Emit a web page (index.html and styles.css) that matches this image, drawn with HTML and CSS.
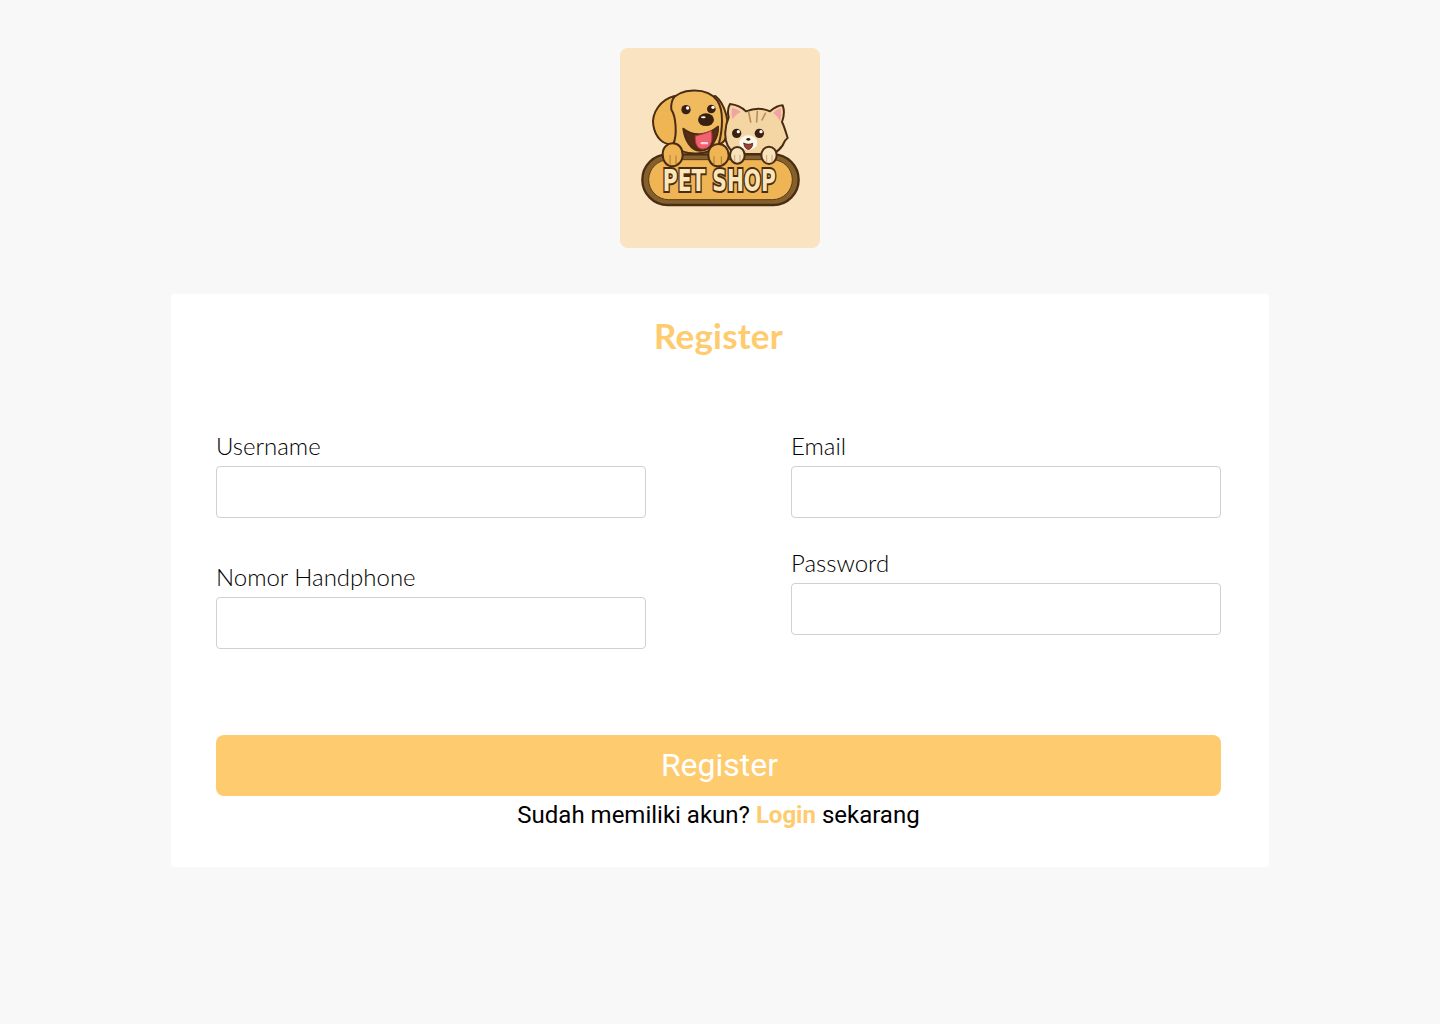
FILE: index.html
```html
<!DOCTYPE html>
<html lang="id">
<head>
<meta charset="utf-8">
<title>Register</title>
<link rel="stylesheet" href="styles.css">
</head>
<body>
<main class="page">
  <div class="logo-tile">
    <svg class="logo" viewBox="0 0 600 600" role="img" aria-label="Pet Shop">
      <g stroke="#4a2c12" stroke-width="6" stroke-linejoin="round" stroke-linecap="round">
        <!-- dog -->
        <path class="dog-ear" d="M286 144C316 168 330 225 320 262C314 285 300 292 288 284C284 240 280 190 270 150Z"/>
        <path class="dog-head" d="M150 160C180 118 262 116 292 158C312 188 308 245 296 290C270 322 190 328 166 292C146 250 136 195 150 160Z"/>
        <path class="dog-ear" d="M164 144C122 154 94 195 100 232C106 268 130 294 160 287C172 262 168 205 154 185C152 170 156 156 164 144Z"/>
        <path class="dog-mouth" d="M190 242C222 268 262 262 294 236C296 268 274 308 240 308C212 308 194 274 190 242Z"/>
        <path class="dog-tongue" d="M226 264C240 260 258 256 274 248C278 272 276 298 252 303C232 306 224 286 226 264Z"/>
        <rect class="tongue-glint" x="242" y="282" width="22" height="7" rx="3.5"/>
        <ellipse class="dark" cx="258" cy="215" rx="24" ry="19"/>
        <circle class="dark" cx="198" cy="185" r="14"/>
        <circle class="dark" cx="274" cy="183" r="13"/>
        <!-- cat -->
        <path class="cat-body" d="M326 208C322 192 324 178 330 168C348 170 366 178 378 190C402 180 428 180 450 190C462 180 476 172 488 172C494 188 492 206 486 222C494 238 498 255 503 270C494 276 492 284 488 292C480 304 470 312 458 318L345 318C326 304 314 280 316 252C317 236 320 222 326 208Z"/>
        <path class="cat-ear" d="M336 180C346 182 356 186 362 192C350 198 342 206 338 214C334 204 334 192 336 180Z"/>
        <path class="cat-ear" d="M482 180C474 182 466 188 460 194C468 202 476 210 480 220C484 208 484 192 482 180Z"/>
        <ellipse class="muzzle" cx="385" cy="284" rx="27" ry="22"/>
        <path class="cat-mouth" d="M372 286C378 290 392 290 398 286C398 297 391 304 385 304C379 304 372 297 372 286Z"/>
        <circle class="dark" cx="350" cy="256" r="14"/>
        <circle class="dark" cx="418" cy="256" r="14"/>
        <ellipse class="dark" cx="385" cy="274" rx="6" ry="4"/>
        <!-- plaque -->
        <rect class="plaque-outer" x="67" y="319" width="469" height="152" rx="76"/>
        <rect class="plaque-inner" x="86" y="335" width="431" height="120" rx="60"/>
        <!-- paws -->
        <path class="dog-paw" d="M128 318C128 296 144 286 158 286C174 286 188 298 188 320C188 342 172 355 156 355C140 355 128 340 128 318Z"/>
        <path class="dog-paw" d="M265 320C265 298 280 288 296 288C312 288 326 302 326 322C326 342 310 355 294 355C278 355 265 342 265 320Z"/>
        <ellipse class="cat-paw" cx="352" cy="322" rx="22" ry="25"/>
        <ellipse class="cat-paw" cx="447" cy="322" rx="23" ry="26"/>
      </g>
      <g fill="none" stroke="#a87a35" stroke-width="3" stroke-linecap="round">
        <path d="M150 322V350M168 324V348M282 326V350M304 326V350"/>
        <path d="M344 322V340M360 322V340M440 322V342M456 322V342" stroke="#c9a67a"/>
        <path d="M386 192L392 222M412 190L410 222M436 196L426 216" stroke="#b98f5c" stroke-width="5"/>
      </g>
      <g fill="#fff">
        <circle cx="203" cy="180" r="5"/><circle cx="279" cy="178" r="5"/>
        <circle cx="355" cy="251" r="5"/><circle cx="423" cy="251" r="5"/>
        <ellipse cx="250" cy="208" rx="7" ry="3"/>
      </g>
      <text class="logo-text" transform="translate(298 428) scale(0.66 1)">PET SHOP</text>
    </svg>
  </div>

  <section class="card">
    <h1 class="title">Register</h1>
    <form class="form">
      <div class="columns">
        <div class="column column-left">
          <div class="field">
            <label class="label" for="username">Username</label>
            <input class="input" id="username" type="text">
          </div>
          <div class="field">
            <label class="label" for="phone">Nomor Handphone</label>
            <input class="input" id="phone" type="text">
          </div>
        </div>
        <div class="column column-right">
          <div class="field">
            <label class="label" for="email">Email</label>
            <input class="input" id="email" type="email">
          </div>
          <div class="field">
            <label class="label" for="password">Password</label>
            <input class="input" id="password" type="password">
          </div>
        </div>
      </div>
      <button class="submit" type="button">Register</button>
      <p class="login-line">Sudah memiliki akun? <a class="login-link" href="#">Login</a> sekarang</p>
    </form>
  </section>
</main>
</body>
</html>
```

FILE: styles.css
```css
* { box-sizing: border-box; }

html, body { margin: 0; padding: 0; }

body {
  min-height: 1024px;
  background: #f8f8f8;
  font-family: Roboto, sans-serif;
  color: #000;
}

.page {
  display: flex;
  flex-direction: column;
  align-items: center;
  padding-top: 48px;
}

.logo-tile {
  width: 200px;
  height: 200px;
  border-radius: 8px;
  background: #f9e3c0;
}

.logo { display: block; width: 200px; height: 200px; }

.dog-head, .dog-ear, .dog-paw { fill: #efb554; }
.dog-head { fill: #f0bb5f; }
.dog-mouth { fill: #5a2c14; }
.dog-tongue { fill: #f0626f; stroke: #b03a45; stroke-width: 3; }
.tongue-glint { fill: #ffd9dc; stroke: none; }
.dark { fill: #3a2010; stroke: none; }
.cat-body { fill: #f3d6a4; }
.cat-ear { fill: #f3a3a3; stroke: none; }
.muzzle { fill: #fff8ec; stroke: none; }
.cat-mouth { fill: #a83c3c; stroke-width: 3; }
.cat-paw { fill: #f7e2bd; }
.plaque-outer { fill: #84602c; stroke-width: 7; }
.plaque-inner { fill: #efb555; stroke: #5c3a1a; stroke-width: 3; }

.logo-text {
  font-family: "DejaVu Sans", sans-serif;
  font-weight: 700;
  font-size: 92px;
  text-anchor: middle;
  fill: #fae6b8;
  stroke: #4a2c12;
  stroke-width: 12px;
  paint-order: stroke;
}

.card {
  width: 1098px;
  height: 573px;
  margin-top: 46px;
  padding: 16px 48px 0 45px;
  border-radius: 4px;
  background: #fff;
}

.title {
  margin: 0;
  height: 52px;
  font-family: Lato, sans-serif;
  font-weight: 700;
  font-size: 35px;
  line-height: 50px;
  letter-spacing: 0.2px;
  text-align: center;
  color: #fecb6e;
}

.form { display: flex; flex-direction: column; }

.columns {
  display: grid;
  grid-template-columns: 430px 430px;
  column-gap: 145px;
  height: 373px;
  padding-top: 70px;
}

.column { display: flex; flex-direction: column; }
.column-left { row-gap: 45px; }
.column-right { row-gap: 31px; }

.field { display: flex; flex-direction: column; }

.label {
  height: 34px;
  font-family: Lato, sans-serif;
  font-weight: 300;
  font-size: 24px;
  line-height: 28px;
  color: #000;
}

.input {
  display: block;
  width: 430px;
  height: 52px;
  margin: 0;
  border: 1px solid #d0d0d0;
  border-radius: 4px;
  background: #fff;
}

.submit {
  display: block;
  width: 1005px;
  height: 61px;
  margin: 0;
  padding: 0 0 0 2px;
  border: 0;
  border-radius: 8px;
  background: #fecb6e;
  color: #fff;
  font-family: Roboto, sans-serif;
  font-size: 32px;
  line-height: 61px;
}

.login-line {
  width: 1005px;
  margin: 4px 0 0;
  font-size: 24px;
  line-height: 30px;
  text-align: center;
}

.login-link {
  color: #fecb6e;
  font-weight: 700;
  text-decoration: none;
}
```
